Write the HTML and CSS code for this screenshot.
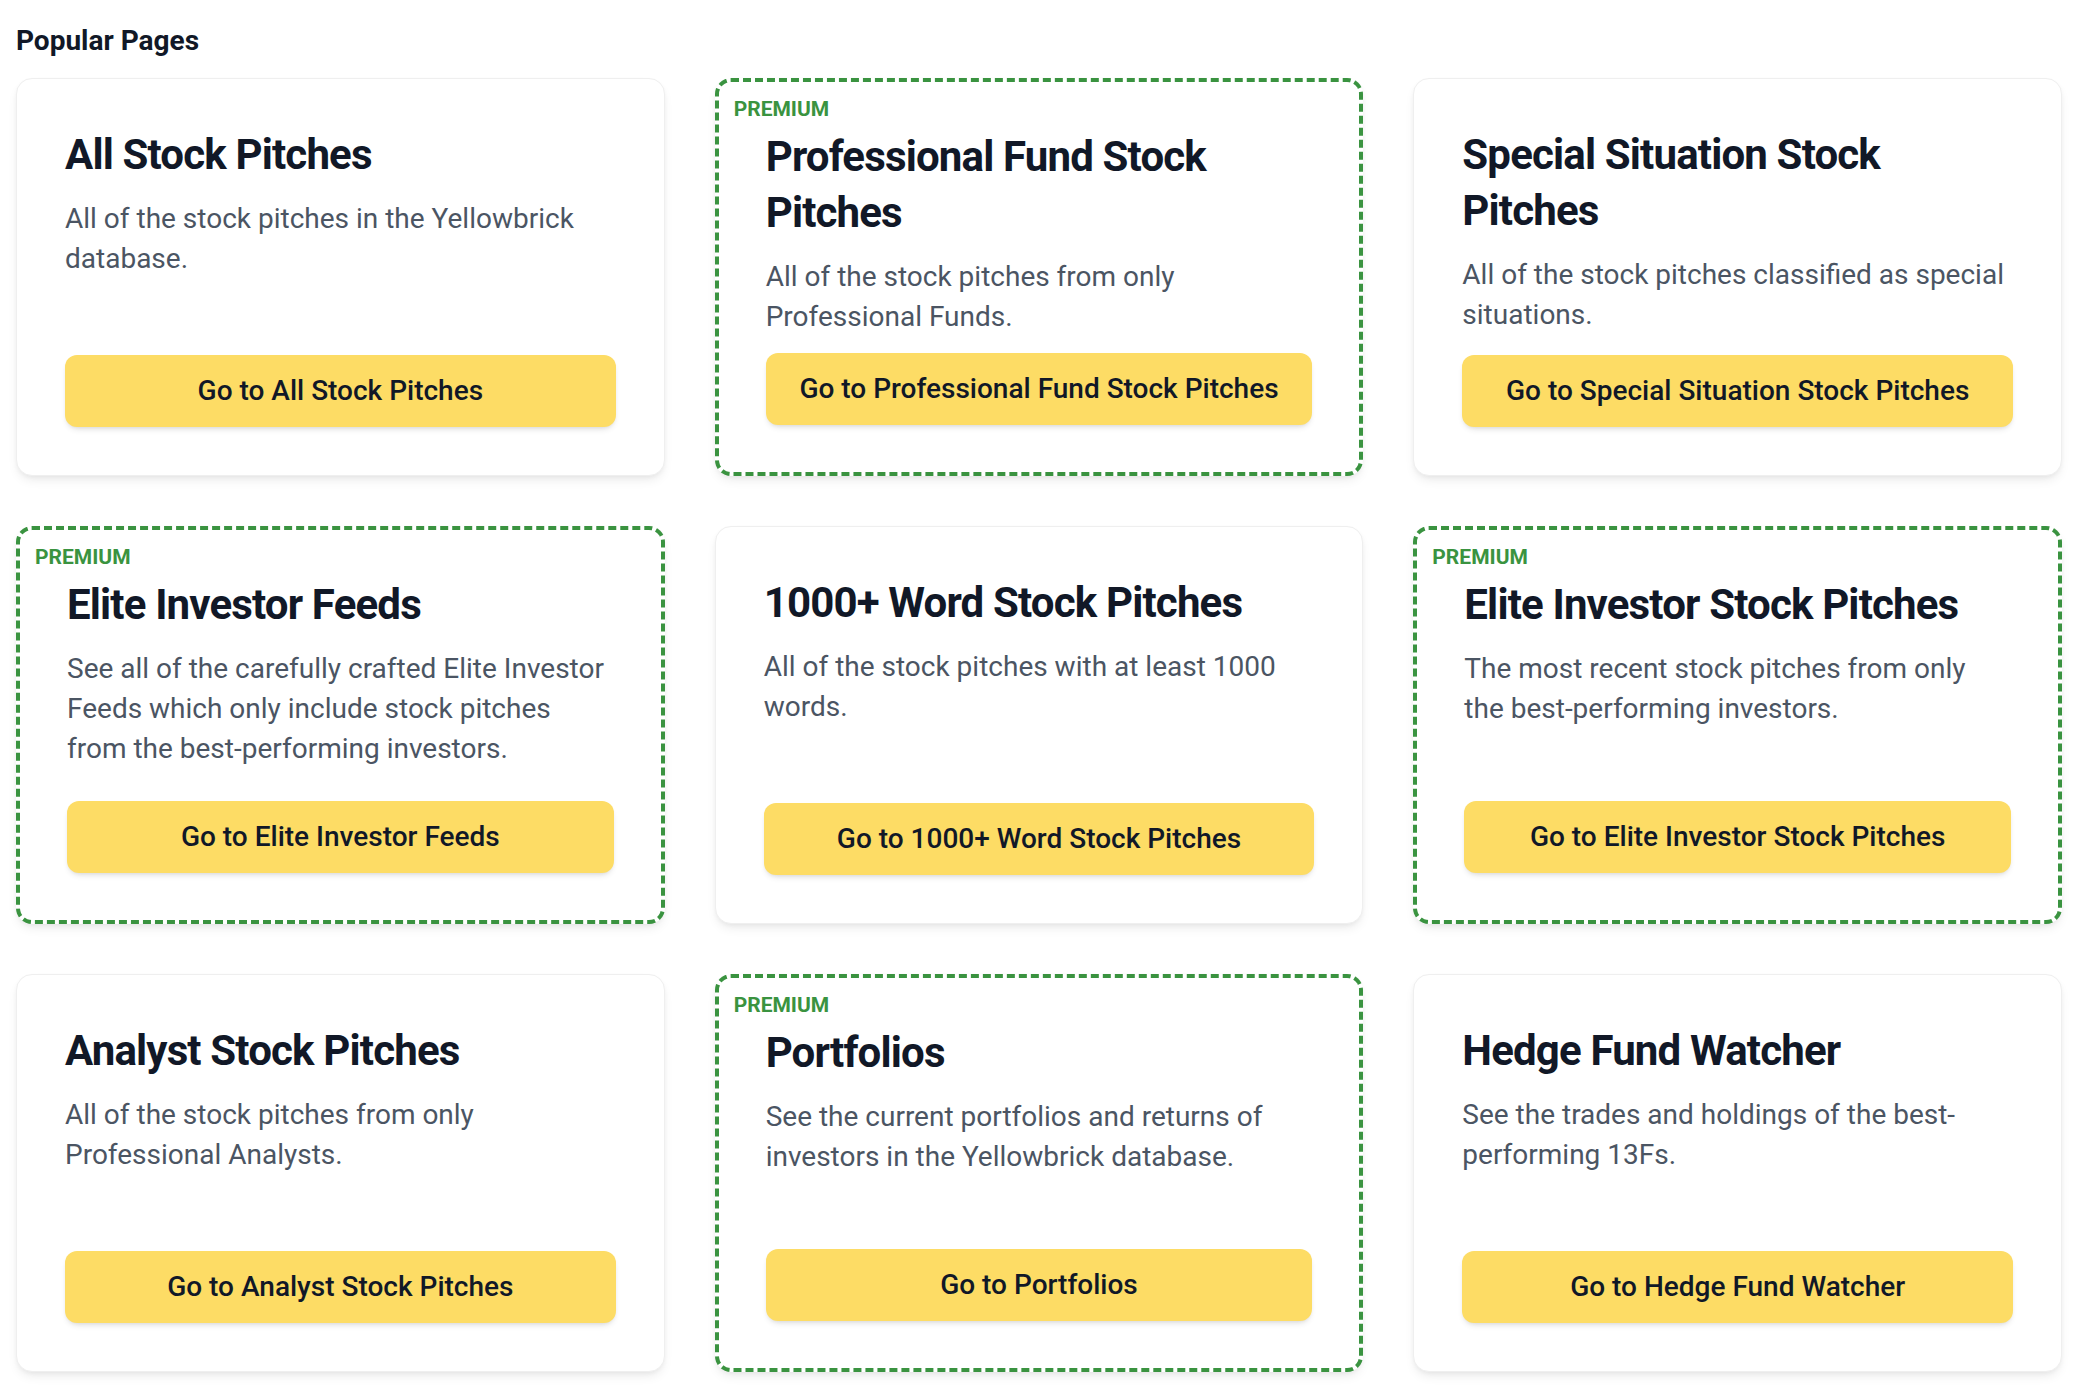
FILE: index.html
```html
<!DOCTYPE html>
<html lang="en">
<head>
<meta charset="utf-8">
<title>Popular Pages</title>
<link rel="stylesheet" href="styles.css">
</head>
<body>
<main class="page">
  <h2 class="page-title">Popular Pages</h2>
  <div class="grid">
    <div class="card">
      <h3 class="card-title">All Stock Pitches</h3>
      <p class="card-desc">All of the stock pitches in the Yellowbrick database.</p>
      <a class="card-btn">Go to All Stock Pitches</a>
    </div>
    <div class="card premium">
      <span class="badge">PREMIUM</span>
      <h3 class="card-title">Professional Fund Stock Pitches</h3>
      <p class="card-desc">All of the stock pitches from only Professional Funds.</p>
      <a class="card-btn">Go to Professional Fund Stock Pitches</a>
    </div>
    <div class="card">
      <h3 class="card-title">Special Situation Stock Pitches</h3>
      <p class="card-desc">All of the stock pitches classified as special situations.</p>
      <a class="card-btn">Go to Special Situation Stock Pitches</a>
    </div>
    <div class="card premium">
      <span class="badge">PREMIUM</span>
      <h3 class="card-title">Elite Investor Feeds</h3>
      <p class="card-desc">See all of the carefully crafted Elite Investor Feeds which only include stock pitches from the best-performing investors.</p>
      <a class="card-btn">Go to Elite Investor Feeds</a>
    </div>
    <div class="card">
      <h3 class="card-title">1000+ Word Stock Pitches</h3>
      <p class="card-desc">All of the stock pitches with at least 1000 words.</p>
      <a class="card-btn">Go to 1000+ Word Stock Pitches</a>
    </div>
    <div class="card premium">
      <span class="badge">PREMIUM</span>
      <h3 class="card-title">Elite Investor Stock Pitches</h3>
      <p class="card-desc">The most recent stock pitches from only the best-performing investors.</p>
      <a class="card-btn">Go to Elite Investor Stock Pitches</a>
    </div>
    <div class="card">
      <h3 class="card-title">Analyst Stock Pitches</h3>
      <p class="card-desc">All of the stock pitches from only Professional Analysts.</p>
      <a class="card-btn">Go to Analyst Stock Pitches</a>
    </div>
    <div class="card premium">
      <span class="badge">PREMIUM</span>
      <h3 class="card-title">Portfolios</h3>
      <p class="card-desc">See the current portfolios and returns of investors in the Yellowbrick database.</p>
      <a class="card-btn">Go to Portfolios</a>
    </div>
    <div class="card">
      <h3 class="card-title">Hedge Fund Watcher</h3>
      <p class="card-desc">See the trades and holdings of the best-performing 13Fs.</p>
      <a class="card-btn">Go to Hedge Fund Watcher</a>
    </div>
  </div>
</main>
</body>
</html>
```
FILE: styles.css
```css
* {
  box-sizing: border-box;
}

html, body {
  margin: 0;
  padding: 0;
  background: #ffffff;
}

body {
  font-family: Roboto, "Liberation Sans", Arial, sans-serif;
  color: #111827;
}

.page {
  padding: 20px 16px 20px 16px;
}

.page-title {
  margin: 0 0 16px 0;
  font-size: 28px;
  line-height: 42px;
  font-weight: 700;
  color: #111827;
}

.grid {
  display: grid;
  grid-template-columns: repeat(3, 1fr);
  grid-auto-rows: 1fr;
  gap: 50px;
}

.card {
  position: relative;
  display: flex;
  flex-direction: column;
  background: #ffffff;
  border: 1px solid #efefef;
  border-radius: 16px;
  padding: 48px;
  box-shadow: 0 6px 12px -3px rgba(0, 0, 0, 0.09), 0 2px 5px -1px rgba(0, 0, 0, 0.05);
}

.card.premium {
  border: 4px dashed #3a9340;
  padding: 47px;
}

.badge {
  position: absolute;
  top: 13px;
  left: 15px;
  font-size: 21px;
  line-height: 28px;
  font-weight: 700;
  color: #3a9340;
}

.card-title {
  margin: 0;
  font-size: 42px;
  line-height: 56px;
  font-weight: 700;
  letter-spacing: -0.02em;
  color: #111827;
}

.card-desc {
  margin: 16px 0 16px 0;
  font-size: 28px;
  line-height: 40px;
  color: #4b5563;
}

.card-btn {
  display: block;
  margin-top: auto;
  padding: 16px 20px;
  background: #fddc65;
  border-radius: 12px;
  text-align: center;
  font-size: 28px;
  line-height: 40px;
  font-weight: 500;
  color: #111827;
  box-shadow: 0 4px 6px -2px rgba(0, 0, 0, 0.12), 0 2px 4px -2px rgba(0, 0, 0, 0.08);
  cursor: pointer;
}
```
